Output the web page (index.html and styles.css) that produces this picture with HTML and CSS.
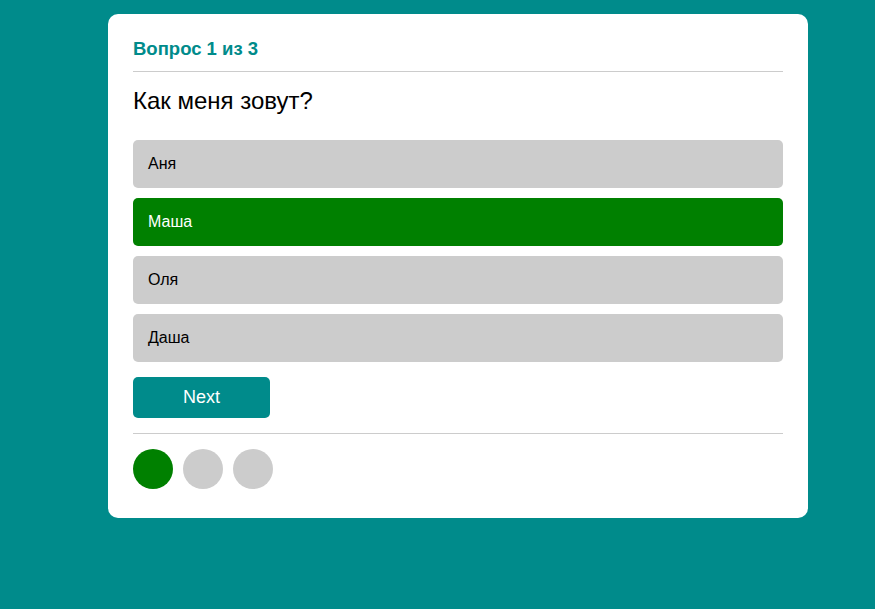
FILE: index.html
```html
<!DOCTYPE html>
<html lang="ru">
<head>
<meta charset="utf-8">
<link rel="stylesheet" href="styles.css">
</head>
<body>
<div class="card">
  <div class="header">Вопрос 1 из 3</div>
  <div class="question">Как меня зовут?</div>
  <div class="options">
    <div class="option">Аня</div>
    <div class="option selected">Маша</div>
    <div class="option">Оля</div>
    <div class="option">Даша</div>
  </div>
  <button class="next">Next</button>
  <div class="progress">
    <span class="dot done"></span>
    <span class="dot"></span>
    <span class="dot"></span>
  </div>
</div>
</body>
</html>
```
FILE: styles.css
```css
html, body {
  margin: 0;
  padding: 0;
}
body {
  background: #008b8b;
  font-family: "Liberation Sans", Arial, sans-serif;
  height: 609px;
  overflow: hidden;
}
.card {
  box-sizing: border-box;
  width: 700px;
  margin: 14px 0 0 108px;
  background: #fff;
  border-radius: 10px;
  padding: 25px 25px 29px;
}
.header {
  color: #008b8b;
  font-weight: bold;
  font-size: 18.5px;
  line-height: 20px;
  padding-bottom: 12px;
  border-bottom: 1px solid #ccc;
}
.question {
  font-size: 24px;
  line-height: 28px;
  margin: 15px 0 25px;
  color: #000;
}
.options {
  display: flex;
  flex-direction: column;
  gap: 10px;
}
.option {
  background: #ccc;
  border-radius: 5px;
  height: 48px;
  box-sizing: border-box;
  padding: 0 15px;
  display: flex;
  align-items: center;
  font-size: 16px;
  color: #000;
}
.option.selected {
  background: #008000;
  color: #fff;
}
.next {
  display: block;
  margin-top: 15px;
  width: 137px;
  height: 41px;
  border: none;
  border-radius: 5px;
  background: #008b8b;
  color: #fff;
  font-family: "Liberation Sans", Arial, sans-serif;
  font-size: 18px;
  padding: 0;
}
.progress {
  margin-top: 15px;
  border-top: 1px solid #ccc;
  padding-top: 15px;
  display: flex;
  gap: 10px;
}
.dot {
  width: 40px;
  height: 40px;
  border-radius: 50%;
  background: #ccc;
}
.dot.done {
  background: #008000;
}
```
